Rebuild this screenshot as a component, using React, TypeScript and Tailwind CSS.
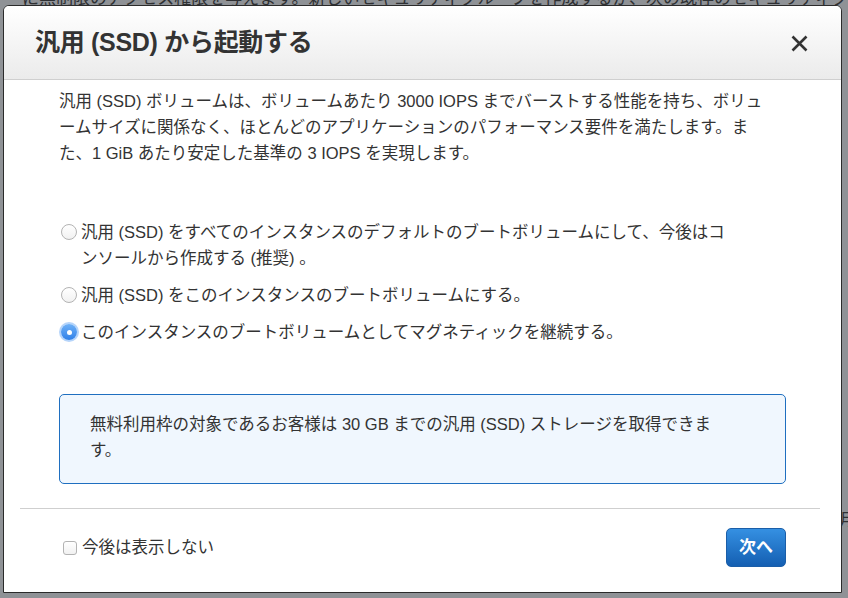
import React from 'react';

const FONT = { fontFamily: '"Liberation Sans", "Noto Sans CJK JP", sans-serif' };

const Radio: React.FC<{ checked?: boolean }> = ({ checked }) =>
  checked ? (
    <span className="mt-[5px] flex h-[16px] w-[16px] shrink-0 items-center justify-center rounded-full bg-gradient-to-b from-[#6fb1f7] to-[#2f80e8] shadow-[0_0_0_2px_rgba(90,160,245,0.45)]">
      <span className="h-[5px] w-[5px] rounded-full bg-white" />
    </span>
  ) : (
    <span className="mt-[5px] h-[16px] w-[16px] shrink-0 rounded-full border border-[#b3b3b3] bg-gradient-to-b from-white to-[#f1f1f1]" />
  );

const Option: React.FC<{ checked?: boolean; lines: string[]; className?: string }> = ({ checked, lines, className }) => (
  <label className={`flex items-start gap-[4px] ${className ?? ''}`}>
    <Radio checked={checked} />
    <span className="leading-[26px]">
      {lines.map((l) => (
        <span key={l} className="block whitespace-nowrap">{l}</span>
      ))}
    </span>
  </label>
);

export default function App() {
  return (
    <div className="relative h-[598px] w-[848px] overflow-hidden bg-[#8f9296]" style={FONT}>
      {/* dimmed page behind the dialog */}
      <div className="absolute left-[22px] top-[-14px] whitespace-nowrap text-[17px] text-[#2e3033]">
        に無制限のアクセス権限を与えます。新しいセキュリティグループを作成するか、次の既存のセキュリティグループ
      </div>
      <div className="absolute right-[-8px] top-[508px] text-[17px] text-[#2e3033]">月</div>

      <div className="absolute left-[3px] top-[5px] flex h-[588px] w-[839px] flex-col overflow-hidden rounded-t-[6px] border border-[#2b2b2b] bg-white text-[#333]">
        <div className="flex h-[74px] shrink-0 items-center justify-between border-b border-[#cfcfcf] bg-gradient-to-b from-white to-[#ebebeb] pl-[31px] pr-[33px]">
          <h1 className="text-[25px] font-bold tracking-[-0.3px] text-[#333]">汎用 (SSD) から起動する</h1>
          <svg width="17" height="17" viewBox="0 0 17 17" className="mt-[2px]">
            <path d="M1.5 1.5 L15.5 15.5 M15.5 1.5 L1.5 15.5" stroke="#333" strokeWidth="2.6" />
          </svg>
        </div>

        <div className="flex flex-col pl-[55px] pr-[55px] pt-[8px] text-[16.5px]">
          <p className="leading-[26px]">
            <span className="block whitespace-nowrap">汎用 (SSD) ボリュームは、ボリュームあたり 3000 IOPS までバーストする性能を持ち、ボリュ</span>
            <span className="block whitespace-nowrap">ームサイズに関係なく、ほとんどのアプリケーションのパフォーマンス要件を満たします。ま</span>
            <span className="block whitespace-nowrap">た、1 GiB あたり安定した基準の 3 IOPS を実現します。</span>
          </p>

          <div className="mt-[53px] flex flex-col pl-[2px]">
            <Option
              lines={[
                '汎用 (SSD) をすべてのインスタンスのデフォルトのブートボリュームにして、今後はコ',
                'ンソールから作成する (推奨) 。',
              ]}
            />
            <Option className="mt-[11px]" lines={['汎用 (SSD) をこのインスタンスのブートボリュームにする。']} />
            <Option checked className="mt-[11px]" lines={['このインスタンスのブートボリュームとしてマグネティックを継続する。']} />
          </div>

          <div className="mt-[49px] h-[90px] rounded-[5px] border border-[#1f6fc0] bg-[#f0f7fe] pl-[30px] pt-[16px] leading-[26px]">
            <span className="block whitespace-nowrap">無料利用枠の対象であるお客様は 30 GB までの汎用 (SSD) ストレージを取得できま</span>
            <span className="block">す。</span>
          </div>
        </div>

        <div className="ml-[16px] mr-[21px] mt-[24px] h-px bg-[#cfcfcf]" />

        <div className="flex items-center justify-between pl-[59px] pr-[55px] pt-[19px]">
          <label className="flex items-center gap-[5px] text-[16.5px] text-[#333]">
            <span className="h-[14px] w-[14px] rounded-[3px] border border-[#b3b3b3] bg-gradient-to-b from-white to-[#f1f1f1]" />
            今後は表示しない
          </label>
          <button className="flex h-[39px] w-[60px] items-center justify-center rounded-[5px] border border-[#1b5ea8] bg-gradient-to-b from-[#3590e2] to-[#145fb2] text-[17px] font-bold text-white">
            次へ
          </button>
        </div>
      </div>
    </div>
  );
}
